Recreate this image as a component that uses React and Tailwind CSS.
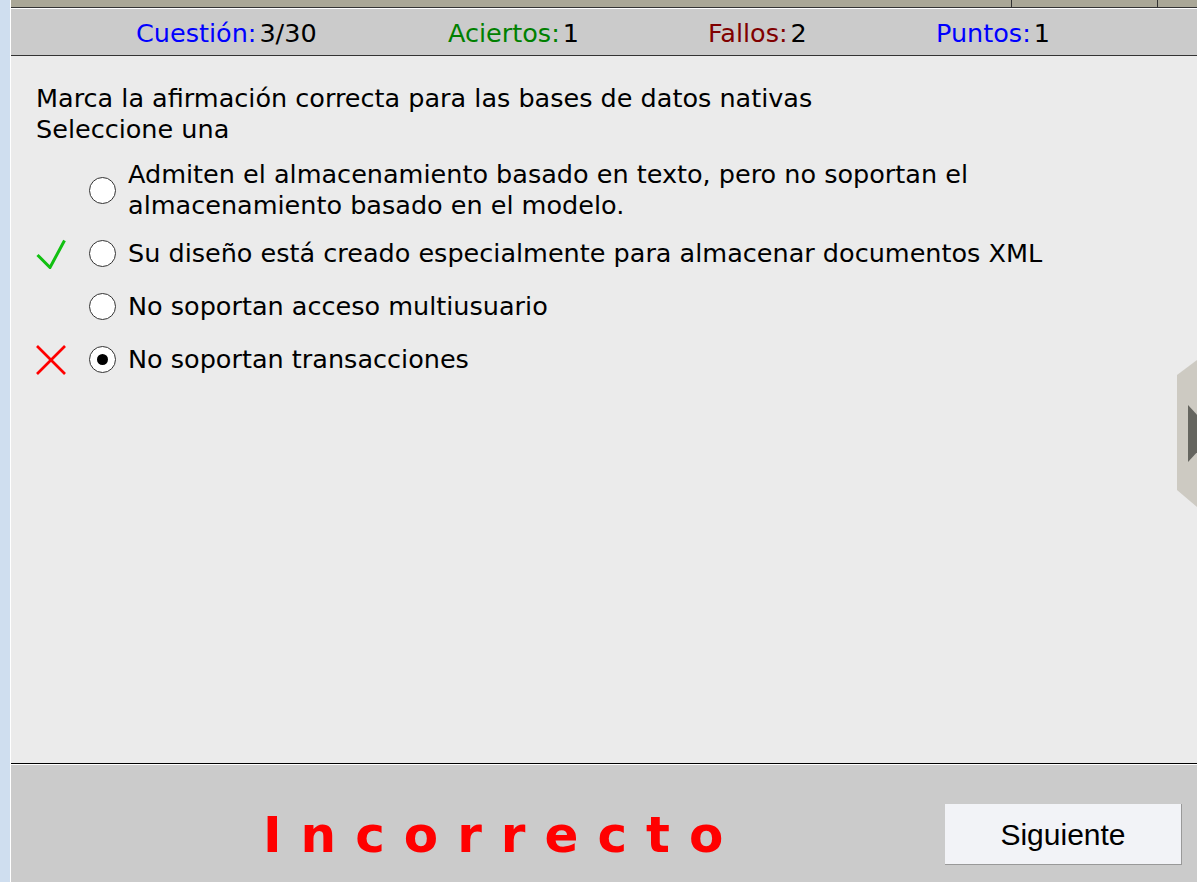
import React from 'react';

const options = [
   { text: 'Admiten el almacenamiento basado en texto, pero no soportan el almacenamiento basado en el modelo.', mark: null, selected: false },
   { text: 'Su diseño está creado especialmente para almacenar documentos XML', mark: 'ok', selected: false },
   { text: 'No soportan acceso multiusuario', mark: null, selected: false },
   { text: 'No soportan transacciones', mark: 'bad', selected: true },
];

const CheckMark = () => (
   <svg width="30" height="30" viewBox="0 0 30 30">
      <polyline points="1.5,16 14,28.5 28.5,1.5" fill="none" stroke="#11c011" strokeWidth="3" />
   </svg>
);

const CrossMark = () => (
   <svg width="30" height="30" viewBox="0 0 30 30">
      <line x1="1" y1="1" x2="29" y2="29" stroke="#ff0000" strokeWidth="2.6" />
      <line x1="29" y1="1" x2="1" y2="29" stroke="#ff0000" strokeWidth="2.6" />
   </svg>
);

const Radio = ({ selected }) => (
   <div className="w-[27px] h-[27px] rounded-full border-[1.5px] border-[#333] bg-white flex items-center justify-center shrink-0">
      {selected && <div className="w-[11px] h-[11px] rounded-full bg-black"></div>}
   </div>
);

const Stat = ({ label, value, color, width }) => (
   <div className={`flex items-baseline ${width}`}>
      <span className={color}>{label}</span>
      <span className="ml-[3px] text-black">{value}</span>
   </div>
);

export default function App() {
   return (
      <div
         className="relative flex h-screen overflow-hidden bg-[#cfdeef] text-black"
         style={{ fontFamily: '"DejaVu Sans", Verdana, sans-serif' }}
      >
         {/* left blue strip */}
         <div className="w-[11px] shrink-0 border-r border-white"></div>

         <div className="flex flex-col flex-1 min-w-0">
            {/* top tab strip */}
            <div className="h-[7px] bg-[#aaa797] flex">
               <div className="w-[1000px]"></div>
               <div className="w-[146px] border-l border-[#333]"></div>
               <div className="flex-1 border-l border-[#333]"></div>
            </div>
            <div className="h-[1px] bg-[#333]"></div>
            <div className="h-[1px] bg-white"></div>

            {/* stats bar */}
            <div className="h-[47px] shrink-0 bg-[#cbcbcb] flex items-center pl-[125px] pt-[2px] text-[25.5px] leading-[31px] border-b border-[#333]">
               <Stat label="Cuestión:" value="3/30" color="text-[#0000ff]" width="w-[312px]" />
               <Stat label="Aciertos:" value="1" color="text-[#008000]" width="w-[260px]" />
               <Stat label="Fallos:" value="2" color="text-[#800000]" width="w-[228px]" />
               <Stat label="Puntos:" value="1" color="text-[#0000ff]" width="w-[200px]" />
            </div>

            {/* question */}
            <div className="flex-1 bg-[#ebebeb] pl-[25px] pr-[40px] pt-[27px] text-[25.5px] leading-[31px]">
               <p>Marca la afirmación correcta para las bases de datos nativas</p>
               <p>Seleccione una</p>
               <div className="flex flex-col">
                  {options.map((opt, i) => (
                     <div key={i} className={`flex items-center ${i === 0 ? 'pt-[14px] pb-[6px]' : 'py-[11px]'}`}>
                        <div className="w-[30px] h-[30px] shrink-0 mr-[23px]">
                           {opt.mark === 'ok' && <CheckMark />}
                           {opt.mark === 'bad' && <CrossMark />}
                        </div>
                        <Radio selected={opt.selected} />
                        <div className="ml-[12px] max-w-[980px]">{opt.text}</div>
                     </div>
                  ))}
               </div>
            </div>

            {/* bottom bar */}
            <div className="h-[1px] bg-black"></div>
            <div className="h-[1px] bg-white"></div>
            <div className="h-[117px] shrink-0 bg-[#cbcbcb] flex items-start pt-[39px]">
               <div className="flex-1 pl-[252px] pt-[2px]">
                  <span className="text-[50px] leading-[58px] font-bold tracking-[19px] text-[#ff0000]">Incorrecto</span>
               </div>
               <button
                  className="w-[237px] h-[61px] mr-[15px] bg-[#f2f3f7] border-r border-b border-[#999] text-[30px] text-black"
                  style={{ fontFamily: '"Liberation Sans", Arial, sans-serif' }}
               >
                  Siguiente
               </button>
            </div>
         </div>

         {/* side tab */}
         <svg className="absolute left-[1177px] top-[360px]" width="40" height="150" viewBox="0 0 40 150">
            <polygon points="0,15 20,0 40,0 40,150 20,147 0,130" fill="#cdcac2" />
            <polygon points="11,45 37,73.5 11,102" fill="#65655f" />
         </svg>
      </div>
   );
}
